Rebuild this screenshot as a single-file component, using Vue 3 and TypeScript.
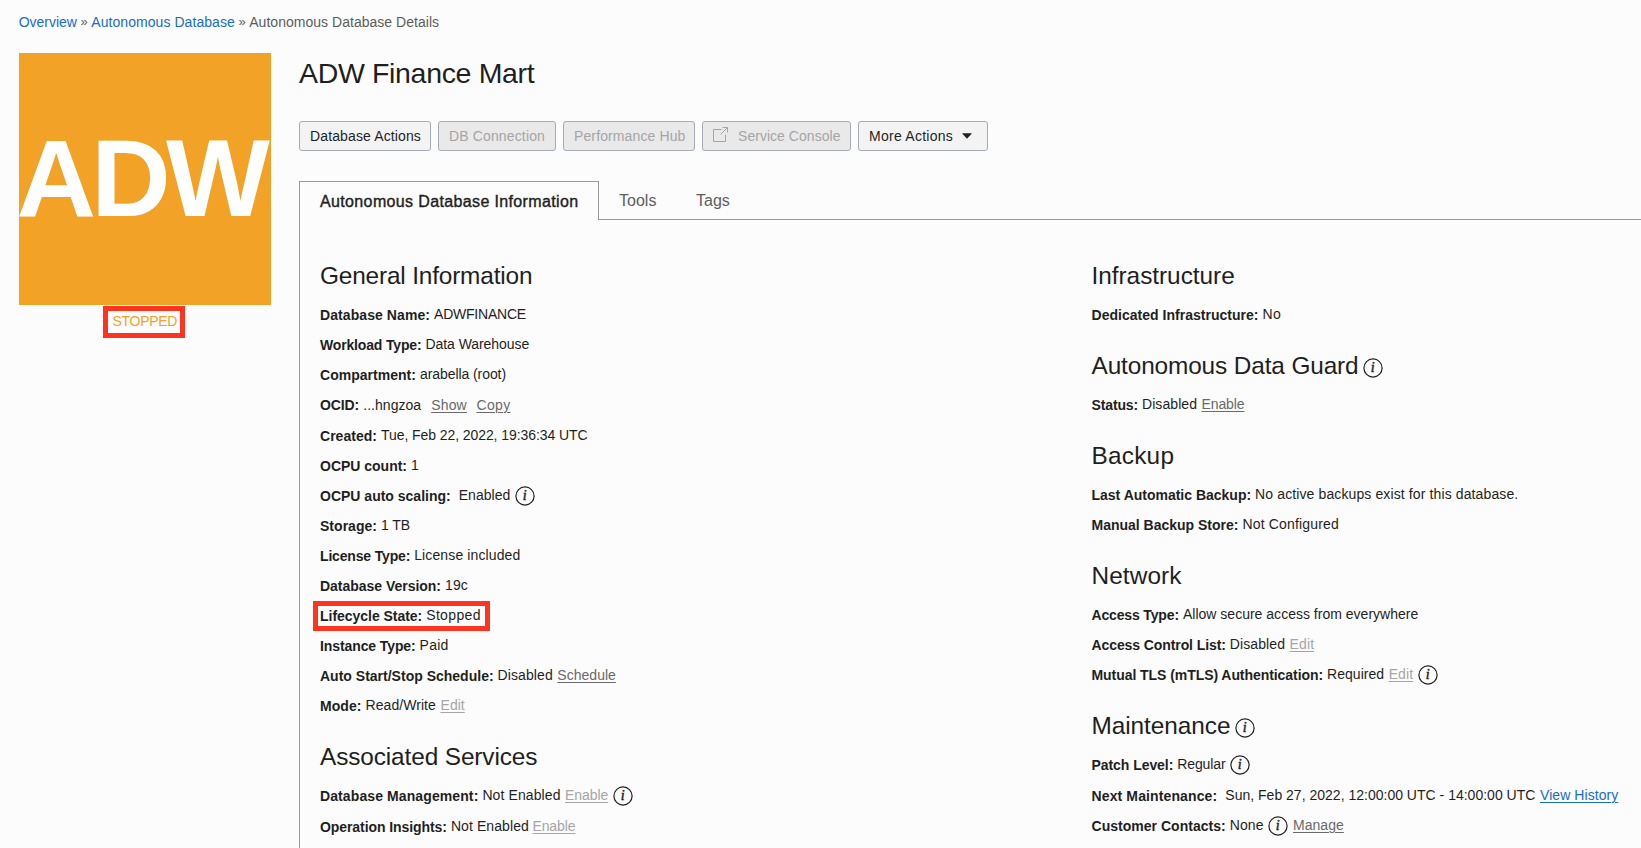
<script setup lang="ts">
import type { Directive } from 'vue'

type Kind = 'text' | 'link' | 'muted' | 'primary' | 'info'
interface Segment { kind: Kind; text?: string; width?: number; gap?: number }
interface Row { label: string; width: number; parts: Segment[]; tall?: boolean; level?: boolean; marked?: boolean }
interface Section { title: string; width: number; info?: boolean; rows: Row[] }

// Tracks a piece of text so that it fills the given advance width.
const vFit: Directive<HTMLElement, number> = {
  mounted(el, { value }) {
    const count = (el.textContent ?? '').length
    if (!count || !value) return
    const natural = el.getBoundingClientRect().width
    el.style.letterSpacing = `${(value - natural) / count}px`
  },
}

const text = (t: string, width: number, gap = 4): Segment => ({ kind: 'text', text: t, width, gap })
const link = (t: string, width: number, gap = 4.6): Segment => ({ kind: 'link', text: t, width, gap })
const muted = (t: string, width: number, gap = 4.6): Segment => ({ kind: 'muted', text: t, width, gap })
const info = (gap = 5): Segment => ({ kind: 'info', gap })

const left: Section[] = [
  {
    title: 'General Information', width: 212.3,
    rows: [
      { label: 'Database Name:', width: 110, parts: [text('ADWFINANCE', 92)] },
      { label: 'Workload Type:', width: 101.5, parts: [text('Data Warehouse', 103.7)] },
      { label: 'Compartment:', width: 96, parts: [text('arabella (root)', 86)] },
      { label: 'OCID:', width: 39.2, tall: true, level: true, parts: [text('...hngzoa', 58), link('Show', 35.7, 10), link('Copy', 34, 9.6)] },
      { label: 'Created:', width: 57, parts: [text('Tue, Feb 22, 2022, 19:36:34 UTC', 206.5)] },
      { label: 'OCPU count:', width: 87, parts: [text('1', 8)] },
      { label: 'OCPU auto scaling:', width: 130.7, parts: [text('Enabled', 51.7, 8), info()] },
      { label: 'Storage:', width: 57, parts: [text('1 TB', 29)] },
      { label: 'License Type:', width: 90.2, parts: [text('License included', 106.2)] },
      { label: 'Database Version:', width: 121, parts: [text('19c', 23)] },
      { label: 'Lifecycle State:', width: 102.2, marked: true, parts: [text('Stopped', 54.6)] },
      { label: 'Instance Type:', width: 95.6, parts: [text('Paid', 29)] },
      { label: 'Auto Start/Stop Schedule:', width: 173.6, parts: [text('Disabled', 55.2), link('Schedule', 58.6, 4.5)] },
      { label: 'Mode:', width: 41.6, parts: [text('Read/Write', 70.3), muted('Edit', 24.3)] },
    ],
  },
  {
    title: 'Associated Services', width: 217.3,
    rows: [
      { label: 'Database Management:', width: 158.4, tall: true, parts: [text('Not Enabled', 78.2), muted('Enable', 43.2, 4.4), info(4.6)] },
      { label: 'Operation Insights:', width: 126.9, parts: [text('Not Enabled', 78), muted('Enable', 43, 3.5)] },
    ],
  },
]

const right: Section[] = [
  {
    title: 'Infrastructure', width: 143.2,
    rows: [{ label: 'Dedicated Infrastructure:', width: 167, parts: [text('No', 18.7)] }],
  },
  {
    title: 'Autonomous Data Guard', width: 267, info: true,
    rows: [{ label: 'Status:', width: 46.5, parts: [text('Disabled', 55.1), link('Enable', 43, 4.4)] }],
  },
  {
    title: 'Backup', width: 82.7,
    rows: [
      { label: 'Last Automatic Backup:', width: 159.6, parts: [text('No active backups exist for this database.', 263.2)] },
      { label: 'Manual Backup Store:', width: 146.9, parts: [text('Not Configured', 96.5)] },
    ],
  },
  {
    title: 'Network', width: 90,
    rows: [
      { label: 'Access Type:', width: 87.4, parts: [text('Allow secure access from everywhere', 235.4)] },
      { label: 'Access Control List:', width: 134.3, parts: [text('Disabled', 55.2), muted('Edit', 24.5)] },
      { label: 'Mutual TLS (mTLS) Authentication:', width: 231.6, parts: [text('Required', 57), muted('Edit', 24.4), info()] },
    ],
  },
  {
    title: 'Maintenance', width: 139, info: true,
    rows: [
      { label: 'Patch Level:', width: 81.8, tall: true, parts: [text('Regular', 48.2), info(4.4)] },
      {
        label: 'Next Maintenance:', width: 125.8,
        parts: [text('Sun, Feb 27, 2022, 12:00:00 UTC - 14:00:00 UTC', 310.1, 8), { kind: 'primary', text: 'View History', width: 78.3, gap: 4.6 }],
      },
      { label: 'Customer Contacts:', width: 134.2, parts: [text('None', 34), info(4.3), link('Manage', 50.8, 5)] },
    ],
  },
]
const columns = [left, right]
</script>

<template>
  <div class="page">
    <nav class="crumbs">
      <a v-fit="58.2">Overview</a><span class="sep">»</span><a v-fit="143.6">Autonomous Database</a><span class="sep">»</span><span v-fit="189.8">Autonomous Database Details</span>
    </nav>

    <div class="body">
      <aside class="side">
        <div class="tile"><span v-fit="248.5">ADW</span></div>
        <div class="state"><span v-fit="64.7">STOPPED</span></div>
      </aside>

      <main class="main">
        <h1><span v-fit="235.3">ADW Finance Mart</span></h1>

        <div class="actions">
          <button class="b1"><span v-fit="111">Database Actions</span></button>
          <button class="b2" disabled><span v-fit="96">DB Connection</span></button>
          <button class="b1" disabled><span v-fit="111.5">Performance Hub</span></button>
          <button class="b3" disabled>
            <svg class="external" width="16" height="16" viewBox="0 0 16 16" fill="none" stroke="currentColor">
              <path d="M8.5 2.5H.5v12h12V7.5M9.5 .5h5v5M14.5 .5 7.5 7.5" />
            </svg>
            <span v-fit="102.5">Service Console</span>
          </button>
          <button class="b4">
            <span v-fit="84">More Actions</span>
            <svg class="caret" width="10" height="6" viewBox="0 0 10 6"><path d="M0 .3h10L5 5.7z" fill="currentColor" /></svg>
          </button>
        </div>

        <div class="tabs">
          <div class="tab active"><span v-fit="258.5">Autonomous Database Information</span></div>
          <div class="tab tools"><span v-fit="37.4">Tools</span></div>
          <div class="tab tags"><span v-fit="33.8">Tags</span></div>
          <div class="rest"></div>
        </div>

        <div class="panel">
          <div v-for="(column, c) in columns" :key="c" class="column">
            <section v-for="section in column" :key="section.title">
              <h2>
                <span v-fit="section.width">{{ section.title }}</span>
                <svg v-if="section.info" class="info" width="20" height="20" viewBox="0 0 20 20">
                  <circle cx="10" cy="10" r="9.1" /><text x="9.8" y="14.3">i</text>
                </svg>
              </h2>
              <div
                v-for="row in section.rows"
                :key="row.label"
                class="row"
                :class="{ tall: row.tall, level: row.level, marked: row.marked }"
              >
                <b v-fit="row.width">{{ row.label }}</b>
                <template v-for="(part, i) in row.parts" :key="i">
                  <svg v-if="part.kind === 'info'" class="info" width="20" height="20" viewBox="0 0 20 20" :style="{ marginLeft: part.gap + 'px' }">
                    <circle cx="10" cy="10" r="9.1" /><text x="9.8" y="14.3">i</text>
                  </svg>
                  <span v-else v-fit="part.width ?? 0" :class="part.kind" :style="{ marginLeft: part.gap + 'px' }">{{ part.text }}</span>
                </template>
              </div>
            </section>
          </div>
        </div>
      </main>
    </div>
  </div>
</template>

<style>
body {
  background: #fcfcfc;
  overflow: hidden;
}
</style>

<style scoped>
.page {
  box-sizing: border-box;
  width: 1641px;
  height: 848px;
  overflow: hidden;
  background: #fcfcfc;
  color: #1f1f1f;
  font: 14px/30px "Liberation Sans", Arial, sans-serif;
  white-space: nowrap;
}
.crumbs {
  box-sizing: border-box;
  display: flex;
  height: 53px;
  padding: 7px 0 0 18.7px;
  color: #5c5c5c;
}
.crumbs a { color: #1a6bca; }
.sep { width: 14.4px; text-align: center; font-size: 13px; }
.body { display: flex; }
.side { width: 252px; padding-left: 19px; }
.tile {
  height: 252px;
  background: #f1a227;
  color: #fff;
  font-size: 110px;
  font-weight: bold;
  line-height: 250px;
  text-indent: -2.5px;
}
.state {
  box-sizing: border-box;
  width: 82px;
  height: 32px;
  margin: 0.6px 0 0 83.6px;
  padding-left: 4.9px;
  border: 5px solid #fd341f;
  color: #f1a227;
  line-height: 21px;
}
.main { flex: 1; min-width: 0; margin-left: 28px; }
h1 { margin: 0; font-size: 28.5px; font-weight: normal; line-height: 41px; }
.actions { display: flex; gap: 7px; margin-top: 27px; }
button {
  box-sizing: border-box;
  display: flex;
  align-items: center;
  height: 30px;
  padding: 0 0 0 10px;
  border: 1px solid #a5acb7;
  border-radius: 3px;
  background: #f3f3f3;
  color: #1f1f1f;
  font: inherit;
  line-height: 28px;
}
button:disabled { background: #e9e9e9; color: #a5a5a5; }
.b1 { width: 132px; }
.b2 { width: 118px; }
.b3 { width: 149px; }
.b4 { width: 130px; }
.external { margin: -3px 9px 0 0; }
.caret { margin-left: 9px; }
.tabs { display: flex; height: 39px; margin-top: 30px; font-size: 16px; line-height: 40px; color: #5e5e5e; }
.tab, .rest { box-sizing: border-box; border-bottom: 1px solid #999; }
.tab { padding-left: 20px; }
.active {
  width: 300px;
  border: 1px solid #999;
  border-bottom: 0;
  color: #1f1f1f;
  -webkit-text-stroke: 0.4px #1f1f1f;
}
.tools { width: 77px; }
.tags { width: 60px; }
.rest { flex: 1; }
.panel { display: flex; height: 640px; padding: 20px 0 0 20px; border-left: 1px solid #999; }
.column { width: 771.5px; flex: none; }
h2 {
  box-sizing: border-box;
  display: flex;
  align-items: center;
  gap: 4.5px;
  height: 60px;
  margin: 0;
  padding: 21px 0 9px;
  font-size: 24.4px;
  font-weight: normal;
  line-height: 30px;
}
h2 .info { margin-top: 4px; }
.row { position: relative; display: flex; height: 30px; align-items: flex-start; }
.row span { line-height: 28px; }
.row.level span { line-height: 30px; }
.row.tall { height: 31px; }
.row .info { margin-top: 5px; }
.row.marked::after {
  content: "";
  position: absolute;
  box-sizing: border-box;
  left: -7.3px;
  top: -0.4px;
  width: 177.6px;
  height: 30px;
  border: 5px solid #fd341f;
}
.link, .muted, .primary { text-decoration: underline 1px; text-underline-offset: 1.5px; }
.link { color: #6a6a6a; }
.muted { color: #a6a6a6; }
.primary { color: #1a6bca; }
.info { flex: none; }
.info circle { fill: none; stroke: #1f1f1f; stroke-width: 1.2; }
.info text {
  fill: #1f1f1f;
  stroke: #1f1f1f;
  stroke-width: 0.45px;
  font: italic 14px "Liberation Serif", serif;
  letter-spacing: 0;
  text-anchor: middle;
}
</style>
